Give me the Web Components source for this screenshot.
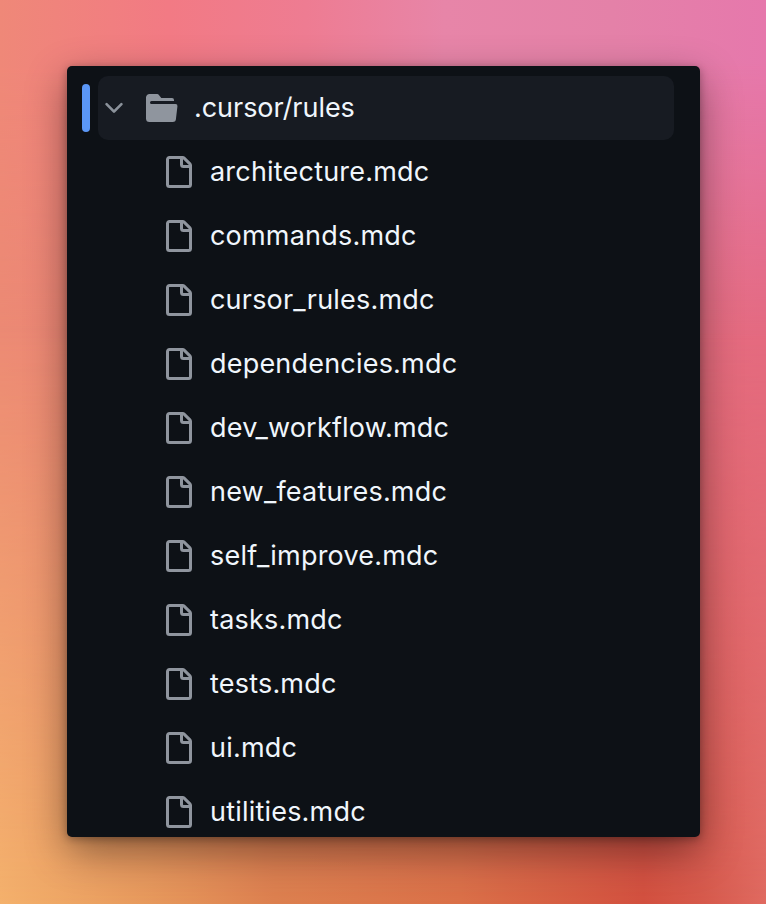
<!DOCTYPE html>
<html lang="en">
<head>
<meta charset="utf-8">
<title>.cursor/rules</title>
<style>
  html, body { margin: 0; padding: 0; }
  body { font-family: 'Inter', sans-serif; }
</style>
</head>
<body>
<page-backdrop>
  <tree-window>
    <tree-folder name=".cursor/rules">
      <tree-file>architecture.mdc</tree-file>
      <tree-file>commands.mdc</tree-file>
      <tree-file>cursor_rules.mdc</tree-file>
      <tree-file>dependencies.mdc</tree-file>
      <tree-file>dev_workflow.mdc</tree-file>
      <tree-file>new_features.mdc</tree-file>
      <tree-file>self_improve.mdc</tree-file>
      <tree-file>tasks.mdc</tree-file>
      <tree-file>tests.mdc</tree-file>
      <tree-file>ui.mdc</tree-file>
      <tree-file>utilities.mdc</tree-file>
    </tree-folder>
  </tree-window>
</page-backdrop>

<script>
// Gradient background behind the window, three horizontal bands faded into each other
class PageBackdrop extends HTMLElement {
  constructor() {
    super();
    this.attachShadow({ mode: 'open' });
    this.shadowRoot.innerHTML = `
      <style>
        :host {
          display: block;
          position: relative;
          box-sizing: border-box;
          width: 766px;
          height: 904px;
          overflow: hidden;
          padding: 66px 66px 67px 67px;
          background: linear-gradient(90deg, #f4b16c 0%, #e6985c 20%, #dc804f 36%, #da7048 60%, #d2503f 84%, #d65a4c 92%, #e06a60 100%);
        }
        :host::before, :host::after {
          content: '';
          position: absolute;
          inset: 0;
        }
        :host::before {
          background: linear-gradient(90deg, #ec8a74 0%, #ea7a78 40%, #e46a80 100%);
          -webkit-mask-image: linear-gradient(180deg, #000 0, #000 330px, transparent 904px);
          mask-image: linear-gradient(180deg, #000 0, #000 330px, transparent 904px);
        }
        :host::after {
          background: linear-gradient(90deg, #ef8878 0%, #f27a84 22%, #ee7c92 40%, #e785a8 58%, #e481a8 80%, #e678ac 100%);
          -webkit-mask-image: linear-gradient(180deg, #000 0, #000 60px, transparent 340px);
          mask-image: linear-gradient(180deg, #000 0, #000 60px, transparent 340px);
        }
        ::slotted(*) { position: relative; z-index: 1; }
      </style>
      <slot></slot>
    `;
  }
}

// Dark panel that clips the list
class TreeWindow extends HTMLElement {
  constructor() {
    super();
    this.attachShadow({ mode: 'open' });
    this.shadowRoot.innerHTML = `
      <style>
        :host {
          display: block;
          box-sizing: border-box;
          width: 633px;
          height: 771px;
          overflow: hidden;
          padding: 10px 26px 0 15px;
          background: #0d1116;
          border-radius: 5px;
          box-shadow: 0 14px 40px rgba(0,0,0,0.42), 0 2px 8px rgba(0,0,0,0.3);
          color: #f0f6fc;
          font-family: 'Inter', sans-serif;
          font-size: 27px;
          letter-spacing: 0.2px;
        }
      </style>
      <slot></slot>
    `;
  }
}

// Open folder row, files go in the slot
class TreeFolder extends HTMLElement {
  constructor() {
    super();
    this.attachShadow({ mode: 'open' });
    this.shadowRoot.innerHTML = `
      <style>
        :host { display: block; }
        .head { display: flex; align-items: center; gap: 8px; height: 64px; }
        .marker { width: 8px; height: 48px; border-radius: 4px; background: #5b97f6; flex: none; }
        .row {
          flex: 1;
          display: flex;
          align-items: center;
          height: 64px;
          border-radius: 10px;
          background: #171b22;
          padding-left: 2px;
        }
        .chevron { width: 28px; height: 28px; fill: #8b929b; flex: none; }
        .folder { width: 32px; height: 32px; fill: #8f959e; flex: none; margin-left: 18px; }
        .name { margin-left: 16px; letter-spacing: -0.05px; line-height: 62px; }
      </style>
      <div class="head">
        <span class="marker"></span>
        <div class="row">
          <svg class="chevron" viewBox="0 0 16 16"><path d="M12.78 5.22a.749.749 0 0 1 0 1.06l-4.25 4.25a.749.749 0 0 1-1.06 0L3.22 6.28a.749.749 0 1 1 1.06-1.06L8 8.939l3.72-3.719a.749.749 0 0 1 1.06 0Z"/></svg>
          <svg class="folder" viewBox="0 0 16 16"><path d="M.513 1.513A1.75 1.75 0 0 1 1.75 1h3.5c.55 0 1.07.26 1.4.7l.9 1.2a.25.25 0 0 0 .2.1H13a1 1 0 0 1 1 1v.5H2.75a.75.75 0 0 0 0 1.5h11.978a1 1 0 0 1 .994 1.117L15 13.25A1.75 1.75 0 0 1 13.25 15H1.75A1.75 1.75 0 0 1 0 13.25V2.75c0-.464.184-.91.513-1.237Z"/></svg>
          <span class="name"></span>
        </div>
      </div>
      <slot></slot>
    `;
  }

  connectedCallback() {
    this.shadowRoot.querySelector('.name').textContent = this.getAttribute('name');
  }
}

// One file row
class TreeFile extends HTMLElement {
  constructor() {
    super();
    this.attachShadow({ mode: 'open' });
    this.shadowRoot.innerHTML = `
      <style>
        :host {
          display: flex;
          align-items: center;
          gap: 16px;
          height: 64px;
          padding-left: 80px;
          line-height: 62px;
        }
        svg { width: 32px; height: 32px; fill: #8f959e; flex: none; }
      </style>
      <svg viewBox="0 0 16 16"><path d="M2 1.75C2 .784 2.784 0 3.75 0h6.586c.464 0 .909.184 1.237.513l2.914 2.914c.329.328.513.773.513 1.237v9.586A1.75 1.75 0 0 1 13.25 16h-9.5A1.75 1.75 0 0 1 2 14.25Zm1.75-.25a.25.25 0 0 0-.25.25v12.5c0 .138.112.25.25.25h9.5a.25.25 0 0 0 .25-.25V6h-2.75A1.75 1.75 0 0 1 9 4.25V1.5Zm6.75.062V4.25c0 .138.112.25.25.25h2.688l-.011-.013-2.914-2.914-.013-.011Z"/></svg>
      <slot></slot>
    `;
  }
}

customElements.define('page-backdrop', PageBackdrop);
customElements.define('tree-window', TreeWindow);
customElements.define('tree-folder', TreeFolder);
customElements.define('tree-file', TreeFile);
</script>
</body>
</html>
